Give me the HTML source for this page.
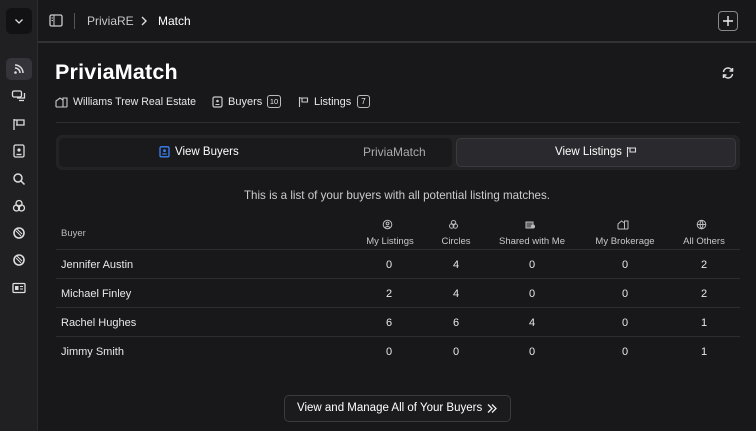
<!DOCTYPE html>
<html><head><meta charset="utf-8"><style>
*{box-sizing:border-box;margin:0;padding:0}
body{width:756px;height:431px;background:#18181b;font-family:"Liberation Sans",sans-serif;color:#e8e8ea;position:relative;overflow:hidden;font-size:11px}
.side{position:absolute;left:0;top:0;width:38px;height:431px;background:#202023;border-right:1px solid #2c2c30}
.abs{position:absolute}
.ic{position:absolute;left:11px;width:16px;height:16px}
svg{display:block}
.hdr{position:absolute;left:38px;top:0;right:0;height:43px;border-bottom:2px solid #333337}
.row{position:absolute;left:56px;width:684px;height:29px;border-top:1px solid #2e2e32}
.row span{position:absolute;top:9px}
.ch{position:absolute;text-align:center;color:#c8c8cc;font-size:9.5px;top:236px}
</style></head><body>
<div class="side">
 <div class="abs" style="left:6px;top:8px;width:26px;height:26px;background:#121214;border-radius:5px"><svg width="26" height="26"><path d="M9.5 11.5l3.5 3.5 3.5-3.5" stroke="#ddd" stroke-width="1.3" fill="none"/></svg></div>
 <div class="abs" style="left:6px;top:58px;width:26px;height:22px;background:#34343a;border-radius:5px"></div>
 <svg class="ic" style="top:61px" width="16" height="16"><path d="M4 4a8 8 0 0 1 8 8M4 7a5 5 0 0 1 5 5" stroke="#ddd" stroke-width="1.5" fill="none"/><circle cx="4.5" cy="11.5" r="1.3" fill="#ddd"/></svg>
 <svg class="ic" style="top:88px" width="16" height="16"><rect x="1.5" y="3" width="9" height="6" rx="1.5" stroke="#ddd" fill="none" stroke-width="1.3"/><path d="M6 10h7.5v-5M8 12.5h5" stroke="#ddd" fill="none" stroke-width="1.3"/></svg>
 <svg class="ic" style="top:116px" width="16" height="16"><path d="M3 3v11M3 4h10v5H5M6 4v5" stroke="#ddd" fill="none" stroke-width="1.3"/></svg>
 <svg class="ic" style="top:143px" width="16" height="16"><rect x="3" y="2" width="10" height="12" rx="1.5" stroke="#ddd" fill="none" stroke-width="1.3"/><circle cx="8" cy="7" r="1.6" fill="#ddd"/><path d="M5.5 11.5h5" stroke="#ddd" stroke-width="1.3"/></svg>
 <svg class="ic" style="top:171px" width="16" height="16"><circle cx="7" cy="7" r="4" stroke="#ddd" fill="none" stroke-width="1.5"/><path d="M10 10l3.5 3.5" stroke="#ddd" stroke-width="1.5"/></svg>
 <svg class="ic" style="top:198px" width="16" height="16"><circle cx="8" cy="5.5" r="3" stroke="#ddd" fill="none" stroke-width="1.3"/><circle cx="5.5" cy="10" r="3" stroke="#ddd" fill="none" stroke-width="1.3"/><circle cx="10.5" cy="10" r="3" stroke="#ddd" fill="none" stroke-width="1.3"/></svg>
 <svg class="ic" style="top:225px" width="16" height="16"><circle cx="8" cy="8" r="5" stroke="#ddd" fill="none" stroke-width="1.6"/><path d="M5 6l5 5M6 4l5 5" stroke="#ddd" stroke-width="1"/></svg>
 <svg class="ic" style="top:252px" width="16" height="16"><circle cx="8" cy="8" r="5" stroke="#ddd" fill="none" stroke-width="1.6"/><path d="M5 6l5 5M6 4l5 5" stroke="#ddd" stroke-width="1"/></svg>
 <svg class="ic" style="top:280px" width="16" height="16"><rect x="2" y="3.5" width="12" height="9" rx="1" stroke="#ddd" fill="none" stroke-width="1.3"/><rect x="4" y="6" width="3.5" height="4" fill="#ddd"/><path d="M9 6.5h3M9 9h3" stroke="#ddd"/></svg>
</div>
<div class="hdr">
 <svg class="abs" style="left:11px;top:14px" width="14" height="13"><rect x="1" y="1" width="12" height="11" rx="1.5" stroke="#ccc" fill="none" stroke-width="1.3"/><path d="M5 1v11M2.5 4h1.5M2.5 6.5h1.5" stroke="#ccc"/></svg>
 <div class="abs" style="left:36px;top:13px;width:1px;height:16px;background:#555"></div>
 <div class="abs" style="left:49px;top:14px;font-size:12px;color:#c8c8cc">PriviaRE</div>
 <svg class="abs" style="left:102px;top:16px" width="8" height="10"><path d="M2 1l4 4-4 4" stroke="#ddd" fill="none" stroke-width="1.4"/></svg>
 <div class="abs" style="left:120px;top:14px;font-size:12px;color:#fff">Match</div>
 <div class="abs" style="left:680px;top:11px;width:20px;height:20px;border:1px solid #888;border-radius:4px"><svg width="18" height="18"><path d="M9 4v10M4 9h10" stroke="#eee" stroke-width="1.4"/></svg></div>
</div>
<div class="abs" style="left:55px;top:60px;font-size:21.5px;font-weight:bold;color:#fff;letter-spacing:0.2px">PriviaMatch</div>
<svg class="abs" style="left:721px;top:66px" width="14" height="14"><path d="M2.5 6a4.5 4.5 0 0 1 8.5-1.5M11.5 8a4.5 4.5 0 0 1-8.5 1.5" stroke="#ddd" fill="none" stroke-width="1.5"/><path d="M11.5 2v3h-3M2.5 12V9h3" stroke="#ddd" fill="none" stroke-width="1.5"/></svg>
<svg class="abs" style="left:55px;top:96px" width="13" height="12"><path d="M1 11V5l4-3 3 2M8 11V2h4v9M1 11h11" stroke="#ccc" fill="none" stroke-width="1.1"/></svg>
<div class="abs" style="left:73px;top:96px;font-size:10.6px">Williams Trew Real Estate</div>
<svg class="abs" style="left:212px;top:96px" width="11" height="12"><rect x="1" y="1" width="9" height="10" rx="1.5" stroke="#ccc" fill="none" stroke-width="1.2"/><circle cx="5.5" cy="5" r="1.3" fill="#ccc"/><path d="M3.5 8.5h4" stroke="#ccc"/></svg>
<div class="abs" style="left:228px;top:96px">Buyers</div>
<div class="abs" style="left:267px;top:95px;width:14px;height:13px;border:1px solid #bbb;border-radius:3px;font-size:7.5px;text-align:center;line-height:11px">10</div>
<svg class="abs" style="left:298px;top:96px" width="11" height="12"><path d="M1.5 1v10M1.5 2h8v4h-6M4 2v4" stroke="#ccc" fill="none" stroke-width="1.1"/></svg>
<div class="abs" style="left:314px;top:96px">Listings</div>
<div class="abs" style="left:357px;top:95px;width:13px;height:13px;border:1px solid #bbb;border-radius:3px;font-size:8px;text-align:center;line-height:11px">7</div>
<div class="abs" style="left:56px;top:122px;width:684px;height:1px;background:#2e2e32"></div>
<div class="abs" style="left:56px;top:135px;width:684px;height:35px;background:#232326;border-radius:6px"></div>
<div class="abs" style="left:59px;top:138px;width:393px;height:29px;background:#1a1a1d;border-radius:5px"></div>
<svg class="abs" style="left:159px;top:146px" width="11" height="12"><rect x="1" y="0.8" width="9" height="10" rx="1.3" stroke="#3b82f6" fill="none" stroke-width="1.3"/><circle cx="5.5" cy="4.6" r="1.4" fill="#3b82f6"/><path d="M3.3 8h4.4" stroke="#3b82f6" stroke-width="1.2"/></svg>
<div class="abs" style="left:175px;top:146px;color:#fff;font-size:11.5px">View Buyers</div>
<div class="abs" style="left:363px;top:145px;font-size:12px;color:#aaa">PriviaMatch</div>
<div class="abs" style="left:456px;top:138px;width:280px;height:29px;background:#2a2a2e;border:1px solid #3a3a3f;border-radius:5px"></div>
<div class="abs" style="left:555px;top:146px;color:#fff;font-size:11.5px">View Listings</div>
<svg class="abs" style="left:626px;top:146px" width="11" height="12"><path d="M1.5 1v10M1.5 2h8v4h-6M4 2v4" stroke="#ddd" fill="none" stroke-width="1.1"/></svg>
<div class="abs" style="left:0;width:794px;top:189px;text-align:center;color:#ccc;font-size:11.6px">This is a list of your buyers with all potential listing matches.</div>
<div class="abs" style="left:61px;top:228px;font-size:9.5px;color:#bbb">Buyer</div>
<svg class="abs" style="left:382px;top:219px" width="11" height="11"><circle cx="5.5" cy="5.5" r="4.3" stroke="#bbb" fill="none"/><circle cx="5.5" cy="4.5" r="1.4" stroke="#bbb" fill="none"/><path d="M3 8.5q2.5-2 5 0" stroke="#bbb" fill="none"/></svg>
<svg class="abs" style="left:448px;top:219px" width="11" height="11"><circle cx="5.5" cy="3.7" r="2.2" stroke="#bbb" fill="none"/><circle cx="3.7" cy="7" r="2.2" stroke="#bbb" fill="none"/><circle cx="7.3" cy="7" r="2.2" stroke="#bbb" fill="none"/></svg>
<svg class="abs" style="left:524px;top:219px" width="12" height="11"><path d="M2 3h7v6H2z" stroke="#bbb" fill="#666"/><circle cx="9" cy="7.5" r="2" fill="#bbb"/></svg>
<svg class="abs" style="left:617px;top:219px" width="12" height="11"><path d="M1 10V5l3.5-3 3 2M7.5 10V2h3.5v8M1 10h10" stroke="#bbb" fill="none"/></svg>
<svg class="abs" style="left:696px;top:219px" width="11" height="11"><circle cx="5.5" cy="5.5" r="4.3" stroke="#bbb" fill="none"/><path d="M1.2 5.5h8.6M5.5 1.2q-3 4.3 0 8.6q3-4.3 0-8.6" stroke="#bbb" fill="none"/></svg>
<div class="ch" style="left:350px;width:80px">My Listings</div>
<div class="ch" style="left:426px;width:60px">Circles</div>
<div class="ch" style="left:482px;width:100px">Shared with Me</div>
<div class="ch" style="left:575px;width:100px">My Brokerage</div>
<div class="ch" style="left:664px;width:80px">All Others</div>
<div class="row" style="top:249px"><span style="left:5px">Jennifer Austin</span><span style="left:330px">0</span><span style="left:397px">4</span><span style="left:473px">0</span><span style="left:566px">0</span><span style="left:645px">2</span></div>
<div class="row" style="top:278px"><span style="left:5px">Michael Finley</span><span style="left:330px">2</span><span style="left:397px">4</span><span style="left:473px">0</span><span style="left:566px">0</span><span style="left:645px">2</span></div>
<div class="row" style="top:307px"><span style="left:5px">Rachel Hughes</span><span style="left:330px">6</span><span style="left:397px">6</span><span style="left:473px">4</span><span style="left:566px">0</span><span style="left:645px">1</span></div>
<div class="row" style="top:336px"><span style="left:5px">Jimmy Smith</span><span style="left:330px">0</span><span style="left:397px">0</span><span style="left:473px">0</span><span style="left:566px">0</span><span style="left:645px">1</span></div>
<div class="abs" style="left:284px;top:395px;width:227px;height:27px;border:1px solid #3a3a3f;border-radius:5px;background:#1b1b1e"></div>
<div class="abs" style="left:297px;top:402px;font-size:11.5px;color:#fff">View and Manage All of Your Buyers</div>
<svg class="abs" style="left:486px;top:403px" width="12" height="11"><path d="M2 1.5l4 4-4 4M6 1.5l4 4-4 4" stroke="#eee" fill="none" stroke-width="1.3"/></svg>
</body></html>
